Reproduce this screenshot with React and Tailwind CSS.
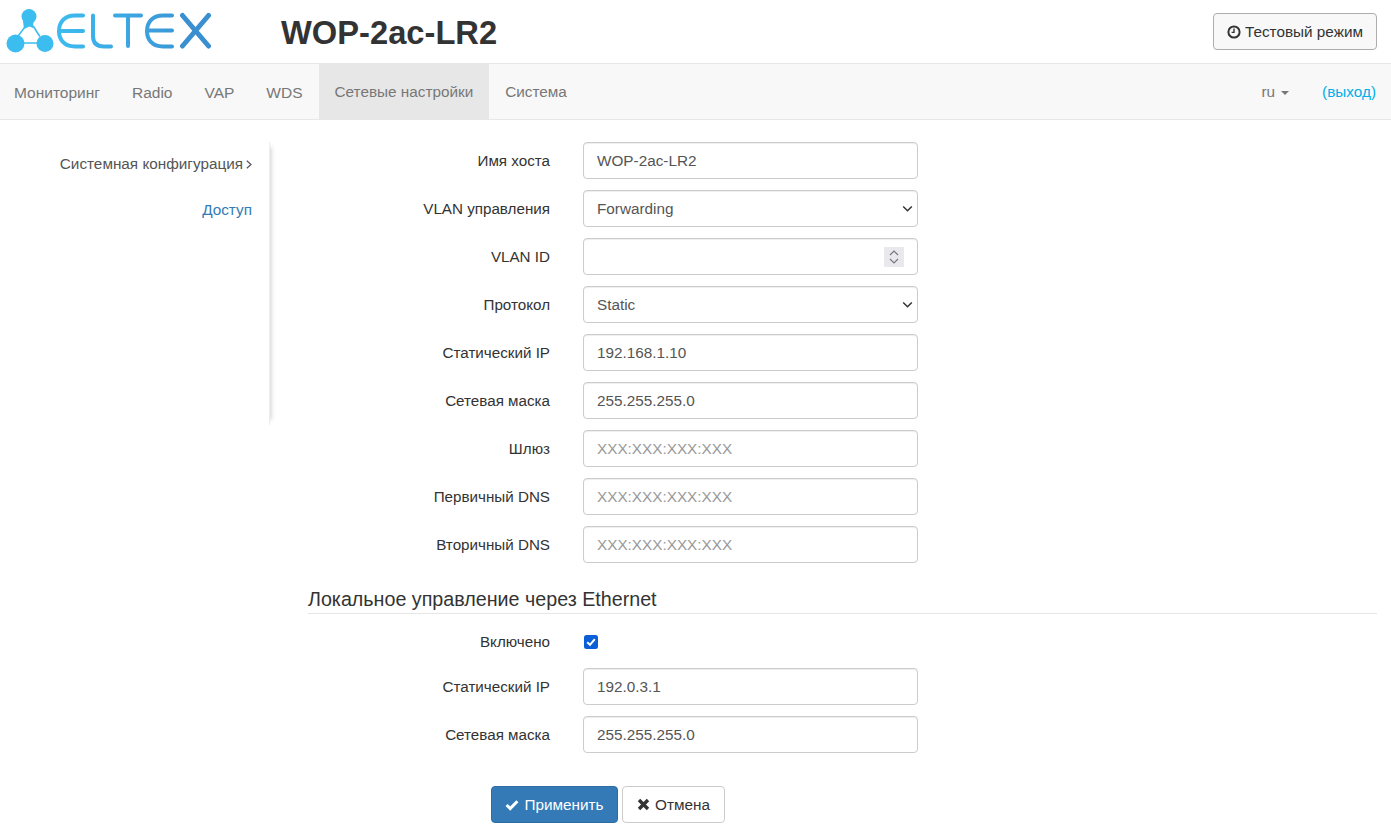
import React from "react";

const font = "[font-family:'Liberation_Sans',Arial,sans-serif]";

function Logo() {
  return (
    <svg width="212" height="63" viewBox="0 0 212 63" fill="none" className="block">
      <defs>
        <linearGradient id="g" x1="56" y1="0" x2="212" y2="0" gradientUnits="userSpaceOnUse">
          <stop offset="0" stopColor="#3dbcf0" />
          <stop offset="1" stopColor="#3a8dcf" />
        </linearGradient>
      </defs>
      <g fill="#3cbdf0">
        <circle cx="29" cy="16.5" r="7.5" />
        <circle cx="15.5" cy="43.5" r="9" />
        <circle cx="45" cy="43.5" r="8.5" />
        <path d="M23 21 L24 29 L29.5 26.5 L33 28 L33.5 21 Z" />
      </g>
      <g stroke="#3cbdf0" strokeWidth="1.6" strokeLinecap="round">
        <path d="M24.5 27.5 L18.5 35.5" />
        <path d="M33.5 26.5 L39.5 36" />
        <path d="M23 43 H38" />
      </g>
      <g stroke="url(#g)" strokeWidth="4" strokeLinecap="round" strokeLinejoin="round">
        <path d="M83 15.5 H75 C64 15.5 59 22.5 59 31 C59 39.5 64 46.5 75 46.5 H83" />
        <path d="M60 31 H83" />
        <path d="M93 15.5 V36 C93 43 97 46.5 104 46.5 H111" />
        <path d="M115 15.5 H141" />
        <path d="M128 16 V46" />
        <path d="M172 15.5 H163 C152 15.5 147 22.5 147 31 C147 39.5 152 46.5 163 46.5 H172" />
        <path d="M148 30.5 H172" />
      </g>
      <g stroke="#3a8fd0" strokeWidth="5" strokeLinecap="round">
        <path d="M182.5 15.5 L208.5 46" />
        <path d="M208.5 15.5 L182.5 46" />
      </g>
    </svg>
  );
}

function Label({ children }) {
  return <label className="w-[280px] text-right text-[15.2px] text-[#333] leading-[20px] shrink-0">{children}</label>;
}

const boxCls =
  "w-[335px] h-[37px] rounded-[4px] border border-[#ccc] bg-white shadow-[inset_0_1px_1px_rgba(0,0,0,0.075)] pl-[13px] pr-3 text-[15.3px] text-[#555] outline-none";

function Row({ label, children }) {
  return (
    <div className="flex items-center gap-[33px] h-[37px] mb-[11px]">
      <Label>{label}</Label>
      {children}
    </div>
  );
}

function TextRow({ label, value, placeholder }) {
  return (
    <Row label={label}>
      <input
        readOnly
        defaultValue={value}
        placeholder={placeholder}
        className={boxCls + " placeholder:text-[#999]"}
      />
    </Row>
  );
}

function Chevron() {
  return (
    <svg width="11" height="8" viewBox="0 0 11 8" fill="none" className="text-[#333]">
      <path d="M1.2 1.5 L5.5 5.8 L9.8 1.5" stroke="currentColor" strokeWidth="1.5" />
    </svg>
  );
}

function SelectRow({ label, value }) {
  return (
    <Row label={label}>
      <div className={boxCls + " flex items-center justify-between pr-[4px]"}>
        <span className="pt-[2px]">{value}</span>
        <Chevron />
      </div>
    </Row>
  );
}

function Clock() {
  return (
    <svg width="14" height="14" viewBox="0 0 14 14" fill="none">
      <circle cx="7" cy="7" r="5.6" stroke="#333" strokeWidth="2" />
      <path d="M7 3.6 V7.4 H4.6" stroke="#333" strokeWidth="1.4" />
    </svg>
  );
}

export default function App() {
  const nav = ["Мониторинг", "Radio", "VAP", "WDS", "Сетевые настройки", "Система"];
  return (
    <div className={font + " w-[1391px] h-[829px] bg-white overflow-hidden text-[15.3px] text-[#333]"}>
      <header className="h-[63px] flex items-center justify-between pr-[14px]">
        <div className="flex items-center">
          <div className="w-[281px] h-[63px]">
            <Logo />
          </div>
          <h1 className="text-[32.7px] font-bold leading-[40px] text-[#333] pt-[2px]">WOP-2ac-LR2</h1>
        </div>
        <button className="h-[37px] w-[164px] rounded-[4px] border border-[#adadad] bg-[#f8f8f8] text-[15.3px] text-[#333] flex items-center justify-center gap-[4px]">
          <Clock />
          <span className="pt-[2px]">Тестовый режим</span>
        </button>
      </header>

      <nav className="h-[57px] bg-[#f8f8f8] border-y border-[#e7e7e7] flex items-stretch justify-between">
        <ul className="flex items-stretch">
          {nav.map((n, i) => (
            <li
              key={n}
              className={
                "flex items-center pt-[2px] text-[#777] " +
                (i === 0 ? "pl-[14px] pr-4 " : "px-4 ") +
                (i < 4 ? "text-[15.5px] " : "") +
                (i === 4 ? "bg-[#e7e7e7] text-[#555]" : "")
              }
            >
              {n}
            </li>
          ))}
        </ul>
        <div className="flex items-center pr-[15px] pt-[2px]">
          <span className="text-[#777]">ru</span>
          <span className="ml-[6px] w-0 h-0 border-x-[4px] border-x-transparent border-t-[4px] border-t-[#777]" />
          <span className="ml-[33px] text-[#00aee8]">(выход)</span>
        </div>
      </nav>

      <div className="flex">
        <aside className="w-[270px] h-[283px] mt-[22px] shrink-0 pr-[17px] shadow-[6px_0_5px_-5px_rgba(0,0,0,0.2)] border-r border-[#eee] flex flex-col items-end">
          <div className="pt-[12px] text-[#555] leading-[20px] flex items-center gap-[3px]">
            <span>Системная конфигурация</span>
            <svg width="6" height="9" viewBox="0 0 6 9" fill="none">
              <path d="M0.8 0.8 L5 4.5 L0.8 8.2" stroke="#555" strokeWidth="1.2" />
            </svg>
          </div>
          <div className="mt-[26px] text-[#337ab7] leading-[20px]">Доступ</div>
        </aside>

        <main className="w-[1107px] pt-[22px]">
          <TextRow label="Имя хоста" value="WOP-2ac-LR2" />
          <SelectRow label="VLAN управления" value="Forwarding" />
          <Row label="VLAN ID">
            <div className={boxCls + " flex items-center justify-end pr-[13px]"}>
              <div className="w-[20px] h-[20px] bg-[#e9e9ed] flex flex-col items-center justify-center gap-[2px]">
                <svg width="10" height="6" viewBox="0 0 10 6" fill="none">
                  <path d="M1 5 L5 1 L9 5" stroke="#77777f" strokeWidth="1.2" />
                </svg>
                <svg width="10" height="6" viewBox="0 0 10 6" fill="none">
                  <path d="M1 1 L5 5 L9 1" stroke="#77777f" strokeWidth="1.2" />
                </svg>
              </div>
            </div>
          </Row>
          <SelectRow label="Протокол" value="Static" />
          <TextRow label="Статический IP" value="192.168.1.10" />
          <TextRow label="Сетевая маска" value="255.255.255.0" />
          <TextRow label="Шлюз" placeholder="XXX:XXX:XXX:XXX" />
          <TextRow label="Первичный DNS" placeholder="XXX:XXX:XXX:XXX" />
          <TextRow label="Вторичный DNS" placeholder="XXX:XXX:XXX:XXX" />

          <div className="ml-[38px] mt-[22px] border-b border-[#e5e5e5] text-[19.7px] leading-[28px] text-[#333]">
            Локальное управление через Ethernet
          </div>

          <div className="flex items-center gap-[34px] h-[20px] mt-[18px] mb-[16px]">
            <Label>Включено</Label>
            <span className="w-[14px] h-[14px] rounded-[2.5px] bg-[#0a5fd8] flex items-center justify-center">
              <svg width="10" height="10" viewBox="0 0 10 10" fill="none">
                <path d="M1.2 5.2 L4 7.8 L8.8 2.2" stroke="#fff" strokeWidth="2" />
              </svg>
            </span>
          </div>

          <TextRow label="Статический IP" value="192.0.3.1" />
          <TextRow label="Сетевая маска" value="255.255.255.0" />

          <div className="flex gap-[4px] ml-[221px] mt-[33px]">
            <button className="w-[127px] h-[37px] rounded-[4px] bg-[#337ab7] border border-[#2e6da4] text-white flex items-center justify-center gap-[5px]">
              <svg width="14" height="12" viewBox="0 0 14 12" fill="none">
                <path d="M1.6 6 L5.2 9.6 L12.4 2.2" stroke="#fff" strokeWidth="3" />
              </svg>
              <span className="pt-[2px]">Применить</span>
            </button>
            <button className="w-[103px] h-[37px] rounded-[4px] bg-white border border-[#ccc] text-[#333] flex items-center justify-center gap-[5px]">
              <svg width="13" height="13" viewBox="0 0 13 13" fill="none">
                <path d="M2 2 L11 11 M11 2 L2 11" stroke="#333" strokeWidth="3.4" />
              </svg>
              <span className="pt-[2px]">Отмена</span>
            </button>
          </div>
        </main>
      </div>
    </div>
  );
}
